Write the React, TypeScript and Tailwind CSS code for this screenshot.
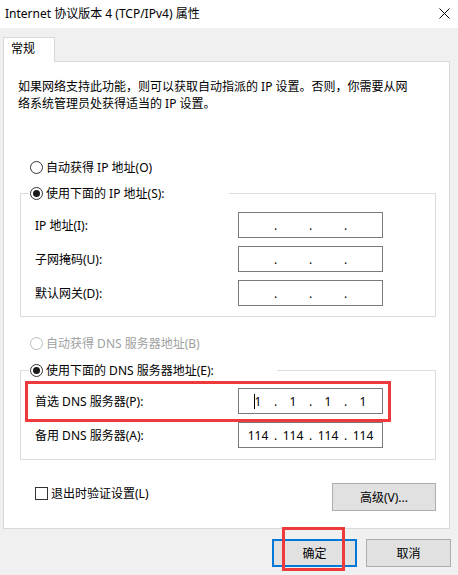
import React from 'react';

function Radio({ checked = false, disabled = false }: { checked?: boolean; disabled?: boolean }) {
  return (
    <span
      className={`flex items-center justify-center size-[13px] rounded-full border bg-white shrink-0 ${
        disabled ? 'border-[#bcbcbc]' : 'border-[#333333]'
      }`}
    >
      {checked && <span className="size-[7px] rounded-full bg-[#1a1a1a]" />}
    </span>
  );
}

function IpBox({ values, caret = false }: { values?: string[]; caret?: boolean }) {
  const parts = values ?? ['', '', '', ''];
  return (
    <div className="flex items-center w-[145px] h-[26px] border border-[#7a7a7a] bg-white pl-[4px]">
      {parts.map((v, i) => (
        <React.Fragment key={i}>
          <span className="relative w-[30px] text-center">
            {caret && i === 0 && <span className="absolute left-[11px] top-[1px] w-px h-[15px] bg-black" />}
            {v}
          </span>
          {i < 3 && <span className="w-[5px] text-center">.</span>}
        </React.Fragment>
      ))}
    </div>
  );
}

function Row({ label, children }: { label: string; children: React.ReactNode }) {
  return (
    <div className="flex items-center justify-between">
      <span>{label}</span>
      {children}
    </div>
  );
}

export default function App() {
  return (
    <div className="w-[458px] h-[575px] overflow-hidden bg-[#f0f0f0] text-black text-[12px] leading-[17px] font-['Noto_Sans','Noto_Sans_CJK_SC',sans-serif]">
      {/* Title bar */}
      <div className="flex items-center justify-between h-[28px] bg-white pl-[5px] pr-[8px]">
        <span className="pb-[2px]">Internet 协议版本 4 (TCP/IPv4) 属性</span>
        <svg width="11" height="11" viewBox="0 0 11 11" className="mb-[2px]">
          <path d="M0.5 0.5 L10.5 10.5 M10.5 0.5 L0.5 10.5" stroke="#000" strokeWidth="1" fill="none" />
        </svg>
      </div>

      <div className="pl-[3px] pt-[9px]">
        {/* Tab */}
        <div className="relative z-10 -mb-px w-[52px] h-[25px] bg-white border border-b-0 border-[#d9d9d9] pl-[7px] pt-[2px]">
          常规
        </div>

        {/* Panel */}
        <div className="w-[447px] h-[468px] bg-white border border-[#d9d9d9]">
          <p className="pl-[14px] pt-[16px]">
            如果网络支持此功能，则可以获取自动指派的 IP 设置。否则，你需要从网
            <br />
            络系统管理员处获得适当的 IP 设置。
          </p>

          <div className="flex items-center gap-[3px] h-[17px] mt-[47px] pl-[26px]">
            <Radio />
            <span>自动获得 IP 地址(O)</span>
          </div>

          <fieldset className="ml-[16px] mt-[9px] w-[416px] border border-[#dcdcdc]">
            <legend className="ml-[8px] w-[200px] px-[1px]">
              <span className="flex items-center gap-[3px] h-[17px]">
                <Radio checked />
                <span>使用下面的 IP 地址(S):</span>
              </span>
            </legend>
            <div className="flex flex-col gap-[8px] pt-[10px] pb-[10px] pl-[14px] pr-[52px]">
              <Row label="IP 地址(I):">
                <IpBox />
              </Row>
              <Row label="子网掩码(U):">
                <IpBox />
              </Row>
              <Row label="默认网关(D):">
                <IpBox />
              </Row>
            </div>
          </fieldset>

          <div className="flex items-center gap-[3px] h-[17px] mt-[18px] pl-[26px] text-[#a0a0a0]">
            <Radio disabled />
            <span>自动获得 DNS 服务器地址(B)</span>
          </div>

          <fieldset className="ml-[16px] mt-[10px] w-[416px] border border-[#dcdcdc]">
            <legend className="ml-[8px] w-[248px] px-[1px]">
              <span className="flex items-center gap-[3px] h-[17px]">
                <Radio checked />
                <span>使用下面的 DNS 服务器地址(E):</span>
              </span>
            </legend>
            <div className="flex flex-col gap-[8px] pt-[9px] pb-[11px] pl-[14px] pr-[52px]">
              <div className="relative">
                <Row label="首选 DNS 服务器(P):">
                  <IpBox values={['1', '1', '1', '1']} caret />
                </Row>
                {/* annotation */}
                <div className="absolute left-[-10px] right-[-8px] top-[-7px] bottom-[-8px] border-[3px] border-[#ee3a3a] pointer-events-none" />
              </div>
              <Row label="备用 DNS 服务器(A):">
                <IpBox values={['114', '114', '114', '114']} />
              </Row>
            </div>
          </fieldset>

          <div className="flex items-start justify-between mt-[23px] pl-[31px] pr-[13px]">
            <div className="flex items-center gap-[3px] mt-[2px]">
              <span className="size-[13px] border border-[#333333] bg-white" />
              <span>退出时验证设置(L)</span>
            </div>
            <button className="w-[104px] h-[28px] bg-[#e1e1e1] border border-[#adadad]">高级(V)...</button>
          </div>
        </div>

        {/* Dialog buttons */}
        <div className="flex gap-[9px] mt-[10px] pl-[269px]">
          <div className="relative">
            <button className="w-[85px] h-[28px] bg-[#e1e1e1] border-2 border-[#0078d7]">确定</button>
            <div className="absolute left-[10px] right-[12px] top-[-12px] bottom-[-4px] border-[3px] border-[#ee3a3a] pointer-events-none" />
          </div>
          <button className="w-[85px] h-[28px] bg-[#e1e1e1] border border-[#adadad]">取消</button>
        </div>
      </div>
    </div>
  );
}
